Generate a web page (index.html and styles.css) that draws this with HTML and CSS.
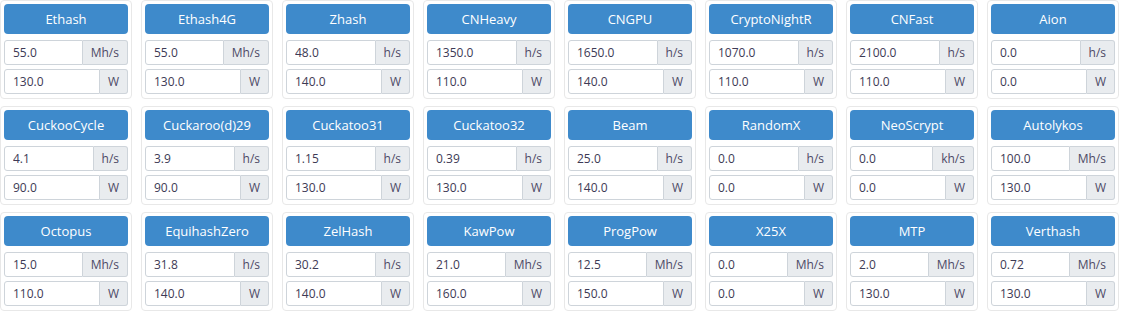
FILE: index.html
```html
<!DOCTYPE html>
<html lang="en">
<head>
    <meta charset="UTF-8">
    <title>Algorithms</title>
    <link rel="stylesheet" href="styles.css">
</head>
<body>
    <div class="algo-grid" id="grid"></div>

    <script>
        // name, hashrate, unit, power
        const algos = [
            ['Ethash', '55.0', 'Mh/s', '130.0'],
            ['Ethash4G', '55.0', 'Mh/s', '130.0'],
            ['Zhash', '48.0', 'h/s', '140.0'],
            ['CNHeavy', '1350.0', 'h/s', '110.0'],
            ['CNGPU', '1650.0', 'h/s', '140.0'],
            ['CryptoNightR', '1070.0', 'h/s', '110.0'],
            ['CNFast', '2100.0', 'h/s', '110.0'],
            ['Aion', '0.0', 'h/s', '0.0'],
            ['CuckooCycle', '4.1', 'h/s', '90.0'],
            ['Cuckaroo(d)29', '3.9', 'h/s', '90.0'],
            ['Cuckatoo31', '1.15', 'h/s', '130.0'],
            ['Cuckatoo32', '0.39', 'h/s', '130.0'],
            ['Beam', '25.0', 'h/s', '140.0'],
            ['RandomX', '0.0', 'h/s', '0.0'],
            ['NeoScrypt', '0.0', 'kh/s', '0.0'],
            ['Autolykos', '100.0', 'Mh/s', '130.0'],
            ['Octopus', '15.0', 'Mh/s', '110.0'],
            ['EquihashZero', '31.8', 'h/s', '140.0'],
            ['ZelHash', '30.2', 'h/s', '140.0'],
            ['KawPow', '21.0', 'Mh/s', '160.0'],
            ['ProgPow', '12.5', 'Mh/s', '150.0'],
            ['X25X', '0.0', 'Mh/s', '0.0'],
            ['MTP', '2.0', 'Mh/s', '130.0'],
            ['Verthash', '0.72', 'Mh/s', '130.0']
        ];

        const grid = document.getElementById('grid');
        algos.forEach(function (a) {
            const card = document.createElement('div');
            card.className = 'algo-card';
            card.innerHTML =
                '<button class="algo-btn">' + a[0] + '</button>' +
                '<div class="input-group">' +
                    '<input class="field" type="text" value="' + a[1] + '">' +
                    '<span class="addon">' + a[2] + '</span>' +
                '</div>' +
                '<div class="input-group">' +
                    '<input class="field" type="text" value="' + a[3] + '">' +
                    '<span class="addon">W</span>' +
                '</div>';
            grid.appendChild(card);
        });
    </script>
</body>
</html>
```

FILE: styles.css
```css
* {
    margin: 0;
    padding: 0;
    box-sizing: border-box;
}

body {
    font-family: 'Open Sans', 'Noto Sans', sans-serif;
    background: #fff;
    color: #495057;
}

.algo-grid {
    display: grid;
    grid-template-columns: repeat(8, 132px);
    column-gap: 9px;
    row-gap: 7px;
}

.algo-card {
    height: 99px;
    border: 1px solid #e8e8e8;
    border-radius: 4px;
    padding: 3px;
}

.algo-btn {
    display: block;
    width: 100%;
    height: 30px;
    border: none;
    border-radius: 4px;
    background: #3e8acb;
    color: #fff;
    font-family: inherit;
    font-size: 13px;
    margin-bottom: 6px;
}

.input-group {
    display: flex;
    height: 25px;
    margin-bottom: 4px;
}

.field {
    flex: 1;
    min-width: 0;
    border: 1px solid #ced4da;
    border-radius: 3px 0 0 3px;
    padding: 0 8px;
    font-family: inherit;
    font-size: 12px;
    color: #3d3a55;
    background: #fff;
}

.addon {
    display: flex;
    align-items: center;
    padding: 0 8px;
    background: #e9ecef;
    border: 1px solid #ced4da;
    border-left: none;
    border-radius: 0 3px 3px 0;
    font-size: 12px;
    color: #4d4a66;
}
```
